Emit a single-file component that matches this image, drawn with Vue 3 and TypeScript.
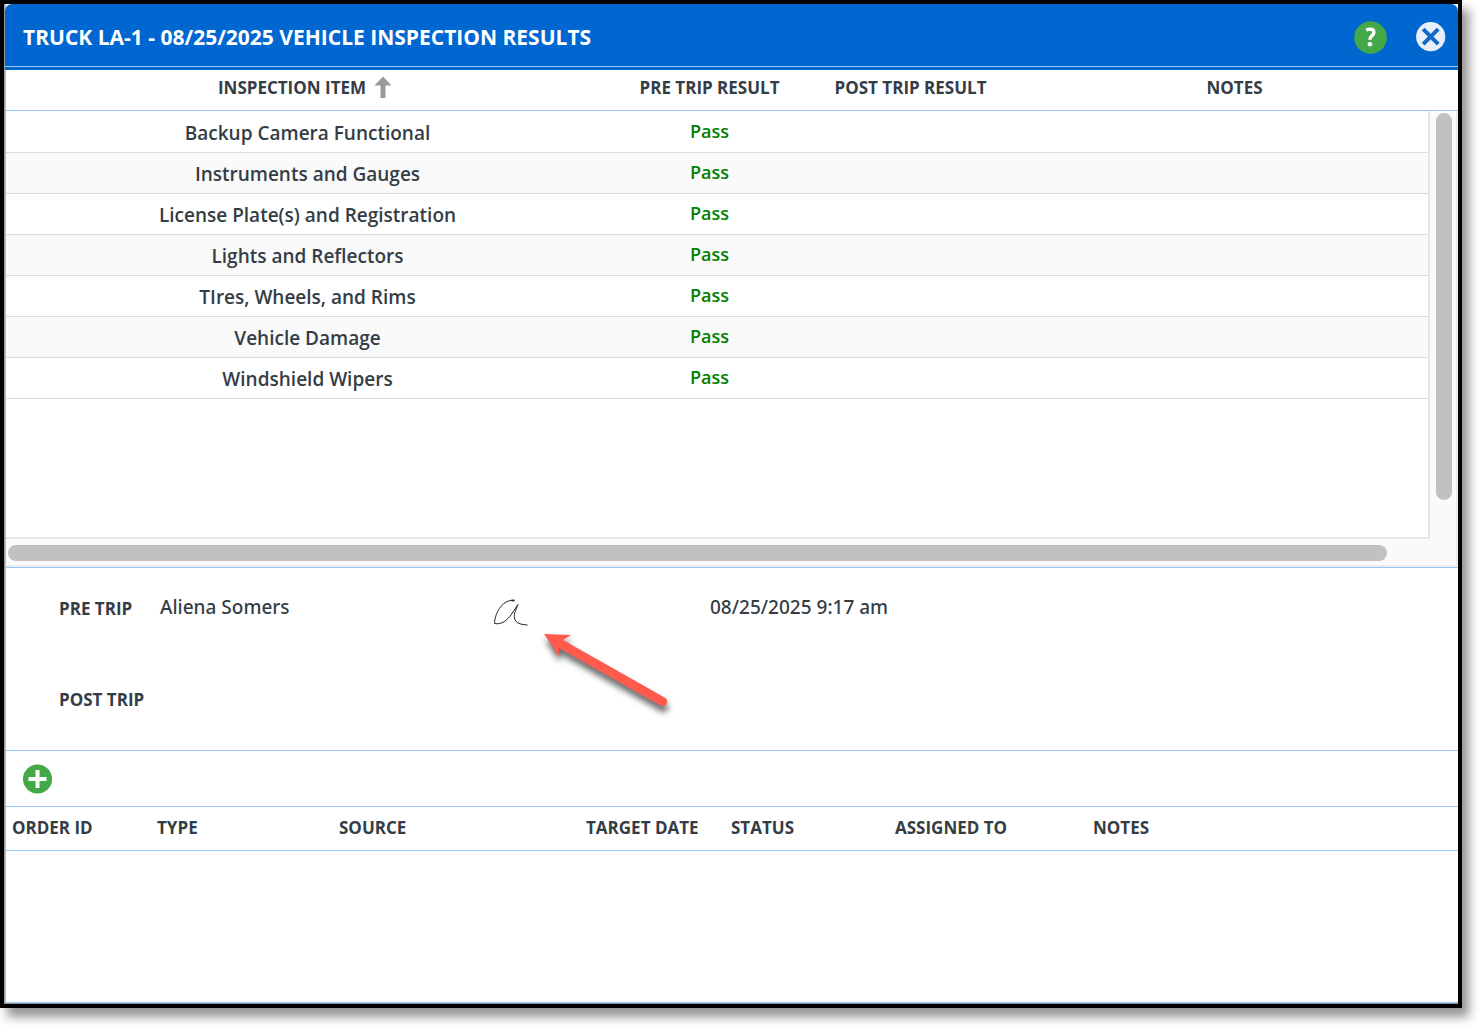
<script setup lang="ts">
interface InspectionRow {
  item: string
  preTrip: string
  postTrip: string
  notes: string
}

interface Signoff {
  label: string
  name: string
  signed: boolean
  date: string
}

const title = 'TRUCK LA-1 - 08/25/2025 VEHICLE INSPECTION RESULTS'

const items: string[] = [
  'Backup Camera Functional',
  'Instruments and Gauges',
  'License Plate(s) and Registration',
  'Lights and Reflectors',
  'TIres, Wheels, and Rims',
  'Vehicle Damage',
  'Windshield Wipers',
]

const rows: InspectionRow[] = items.map((item) => ({
  item,
  preTrip: 'Pass',
  postTrip: '',
  notes: '',
}))

const signoffs: Signoff[] = [
  { label: 'PRE TRIP', name: 'Aliena Somers', signed: true, date: '08/25/2025 9:17 am' },
  { label: 'POST TRIP', name: '', signed: false, date: '' },
]

const orderColumns: string[] = ['ORDER ID', 'TYPE', 'SOURCE', 'TARGET DATE', 'STATUS', 'ASSIGNED TO', 'NOTES']
</script>

<template>
  <div class="page">
    <main class="dialog">
      <header class="titlebar">
        <h1>{{ title }}</h1>
        <button type="button" class="icon-btn help" aria-label="Help">
          <svg width="33" height="33" viewBox="0 0 33 33">
            <circle cx="16.5" cy="16.5" r="16.3" fill="#43a847" />
            <path d="M12.300 9.200c2.400-1.500 7.600-1.800 7.600 2.100 0 3.300-4 3.200-4 7.400" fill="none" stroke="#fff" stroke-width="3.400" />
            <circle cx="15.900" cy="23.200" r="2.300" fill="#fff" />
          </svg>
        </button>
        <button type="button" class="icon-btn" aria-label="Close">
          <svg width="30" height="30" viewBox="0 0 30 30">
            <circle cx="14.700" cy="14.700" r="14.600" fill="#e6effa" />
            <path d="M7.200 7.200l15 15M22.200 7.200L7.200 22.200" stroke="#1268c8" stroke-width="4" />
          </svg>
        </button>
      </header>

      <table class="results head">
        <colgroup><col class="c-item" /><col class="c-result" /><col class="c-result" /><col /></colgroup>
        <thead>
          <tr>
            <th scope="col">
              <span class="sorted">
                INSPECTION ITEM
                <svg width="18" height="24" viewBox="0 0 18 24">
                  <path d="M9 0.500L17.500 9.500H11.500V22H6.500V9.500H0.500Z" fill="#999" />
                </svg>
              </span>
            </th>
            <th scope="col">PRE TRIP RESULT</th>
            <th scope="col">POST TRIP RESULT</th>
            <th scope="col">NOTES</th>
          </tr>
        </thead>
      </table>

      <section class="scroller">
        <div class="upper">
          <div class="viewport">
            <table class="results body">
              <colgroup><col class="c-item" /><col class="c-result" /><col class="c-result" /><col /></colgroup>
              <tbody>
                <tr v-for="row in rows" :key="row.item">
                  <td class="item">{{ row.item }}</td>
                  <td class="pass">{{ row.preTrip }}</td>
                  <td>{{ row.postTrip }}</td>
                  <td>{{ row.notes }}</td>
                </tr>
              </tbody>
            </table>
          </div>
          <div class="vbar"><div class="thumb"></div></div>
        </div>
        <div class="hbar"><div class="thumb"></div></div>
      </section>

      <section class="signoffs">
        <div v-for="s in signoffs" :key="s.label" class="signoff">
          <strong>{{ s.label }}</strong>
          <span class="name">{{ s.name }}</span>
          <div class="signature">
            <template v-if="s.signed">
              <svg class="ink" width="36" height="30" viewBox="0 0 36 30" fill="none" stroke="#222">
                <path d="M20 3.500C10 2 1 14 0.500 26.500C8 28 13 23 17 18L24 7.500C22 13 19.500 17 20.500 21C21.500 26.500 27 27.500 33.500 28" stroke-width="1" />
                <path d="M17.500 3.300L20.500 3.700" stroke-width="1.800" />
              </svg>
              <svg class="pointer" width="136" height="96" viewBox="0 0 136 96">
                <path d="M4 4L31 5L23 10L125.500 68A4.600 4.600 0 0 1 121.500 76L19 18L19 26Z" fill="#ff5a4b" />
              </svg>
            </template>
          </div>
          <time class="date">{{ s.date }}</time>
        </div>
      </section>

      <div class="toolbar">
        <button type="button" class="icon-btn" aria-label="Add order">
          <svg width="30" height="30" viewBox="0 0 30 30">
            <circle cx="14.500" cy="15" r="14.600" fill="#43a847" />
            <path d="M14.500 6v18M5.500 15h18" stroke="#fff" stroke-width="4" />
          </svg>
        </button>
      </div>

      <table class="orders">
        <colgroup>
          <col class="o-id" /><col class="o-type" /><col class="o-source" /><col class="o-target" />
          <col class="o-status" /><col class="o-assigned" /><col />
        </colgroup>
        <thead>
          <tr>
            <th v-for="c in orderColumns" :key="c" scope="col">{{ c }}</th>
          </tr>
        </thead>
      </table>
    </main>
  </div>
</template>

<style>
body {
  margin: 0;
  background: #fff;
}
</style>

<style scoped>
* {
  box-sizing: border-box;
}
.page {
  display: flex;
  min-height: 100vh;
  padding: 0 20px 20px 0;
  overflow: hidden;
  font-family: "Open Sans", "Noto Sans", sans-serif;
  font-size: 17px;
  line-height: 24px;
  color: #343d46;
}
.dialog {
  flex: 1;
  min-width: 0;
  display: flex;
  flex-direction: column;
  border: 4px solid #000;
  background: #fff;
  box-shadow: 7px 9px 10px rgba(0, 0, 0, 0.42), inset 1px -1px 0 #999, inset 2px -2px 0 #99c8f8;
  padding: 0 0 2px 2px;
}
.titlebar {
  display: flex;
  align-items: center;
  height: 66px;
  margin-left: -1px;
  padding: 0 12px 0 18px;
  border-radius: 7px 7px 0 0;
  background: linear-gradient(#99c8f8, #99c8f8) 0 62px / 100% 1px no-repeat #0066d0;
}
h1 {
  flex: 1;
  margin: 0;
  font-size: 21px;
  font-weight: 700;
  line-height: 66px;
  color: #fff;
  white-space: nowrap;
}
.icon-btn {
  display: block;
  padding: 0;
  border: 0;
  background: none;
  cursor: pointer;
}
.icon-btn svg {
  display: block;
}
.help {
  margin-right: 29px;
}
table {
  width: 100%;
  table-layout: fixed;
  border-collapse: collapse;
}
th {
  padding: 0;
  font-size: 17px;
  font-weight: 700;
  white-space: nowrap;
}
.c-item {
  width: 603px;
}
.c-result {
  width: 201px;
}
.head th {
  height: 40px;
  padding-bottom: 4px;
}
.head tr,
.orders tr {
  box-shadow: 0 1px 0 #99c8f8;
}
.sorted {
  display: inline-flex;
  align-items: center;
  gap: 8px;
  padding-right: 5px;
}
.scroller {
  margin-top: 1px;
  border-bottom: 1px solid #99c8f8;
  background: #fafafa;
}
.upper {
  display: flex;
}
.viewport {
  flex: 1;
  min-width: 0;
  height: 428px;
  border: solid #e6e6e6;
  border-width: 0 2px 2px 0;
  background: #fff;
}
.body tr {
  border-bottom: 1px solid #d8dadc;
}
.body tr:nth-child(even) {
  background: #fafafa;
}
.body td {
  height: 41px;
  padding: 0;
  text-align: center;
  font-size: 19px;
  font-weight: 600;
}
.body .item {
  padding-top: 3px;
}
.body .pass {
  padding-bottom: 1px;
  font-size: 18px;
  color: #008000;
}
.vbar {
  width: 28px;
  padding: 2px 4px 0 6px;
  border-right: 2px solid #ededed;
}
.thumb {
  border-radius: 8px;
  background: #c1c1c1;
}
.vbar .thumb {
  width: 16px;
  height: 387px;
}
.hbar {
  height: 28px;
  padding: 6px 69px 0 2px;
  border: solid #ededed;
  border-width: 0 2px 2px 0;
}
.hbar .thumb {
  height: 16px;
}
.signoffs {
  border-bottom: 1px solid #99c8f8;
}
.signoff {
  display: grid;
  grid-template-columns: 101px 334px 216px 1fr;
  height: 91px;
  padding: 29px 0 0 53px;
}
.name,
.date {
  font-family: "Noto Sans", "Open Sans", sans-serif;
  font-size: 19px;
  font-weight: 500;
  line-height: 20px;
}
.signature {
  position: relative;
}
.ink {
  display: block;
}
.pointer {
  position: absolute;
  left: 46px;
  top: 33px;
  filter: drop-shadow(1px 6px 3px rgba(0, 0, 0, 0.6));
}
.toolbar {
  height: 56px;
  padding: 13px 0 0 17px;
  border-bottom: 1px solid #99c8f8;
}
.orders th {
  height: 43px;
  padding: 0 0 2px 6px;
  text-align: left;
}
.o-id,
.o-target {
  width: 145px;
}
.o-type {
  width: 182px;
}
.o-source {
  width: 247px;
}
.o-status {
  width: 164px;
}
.o-assigned {
  width: 198px;
}
</style>
